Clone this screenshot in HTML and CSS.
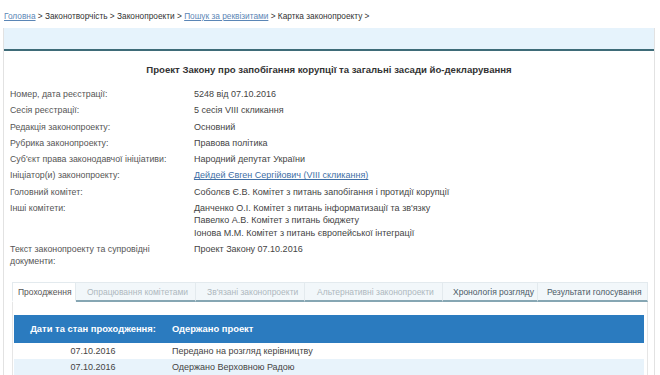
FILE: index.html
```html
<!DOCTYPE html>
<html lang="uk">
<head>
<meta charset="utf-8">
<title>Картка законопроекту</title>
<link rel="stylesheet" href="styles.css">
</head>
<body>
<div class="crumbs"><a href="#">Головна</a> &gt; Законотворчість &gt; Законопроекти &gt; <a href="#">Пошук за реквізитами</a> &gt; Картка законопроекту &gt;</div>
<div class="card">
  <div class="band"></div>
  <div class="content">
    <h1 class="title">Проект Закону про запобігання корупції та загальні засади йо-декларування</h1>
    <div class="info">
      <div class="lbl">Номер, дата реєстрації:</div><div class="val">5248 від 07.10.2016</div>
      <div class="lbl">Сесія реєстрації:</div><div class="val">5 сесія VIII скликання</div>
      <div class="lbl">Редакція законопроекту:</div><div class="val">Основний</div>
      <div class="lbl">Рубрика законопроекту:</div><div class="val">Правова політика</div>
      <div class="lbl">Суб'єкт права законодавчої ініціативи:</div><div class="val">Народний депутат України</div>
      <div class="lbl">Ініціатор(и) законопроекту:</div><div class="val"><a href="#">Дейдей Євген Сергійович (VIII скликання)</a></div>
      <div class="lbl">Головний комітет:</div><div class="val">Соболєв Є.В. Комітет з питань запобігання і протидії корупції</div>
      <div class="lbl">Інші комітети:</div><div class="val">Данченко О.І. Комітет з питань інформатизації та зв'язку<br>Павелко А.В. Комітет з питань бюджету<br>Іонова М.М. Комітет з питань європейської інтеграції</div>
      <div class="lbl">Текст законопроекту та супровідні<br>документи:</div><div class="val">Проект Закону 07.10.2016</div>
    </div>
    <div class="tabs">
      <div class="tab active">Проходження</div>
      <div class="tab off">Опрацювання комітетами</div>
      <div class="tab off">Зв'язані законопроекти</div>
      <div class="tab off">Альтернативні законопроекти</div>
      <div class="tab on">Хронологія розгляду</div>
      <div class="tab on">Результати голосування</div>
    </div>
    <div class="panel">
      <div class="thead">
        <div class="c1">Дати та стан проходження:</div>
        <div class="c2">Одержано проект</div>
      </div>
      <div class="trow">
        <div class="c1">07.10.2016</div>
        <div class="c2">Передано на розгляд керівництву</div>
      </div>
      <div class="trow alt">
        <div class="c1">07.10.2016</div>
        <div class="c2">Одержано Верховною Радою</div>
      </div>
    </div>
  </div>
</div>
</body>
</html>
```
FILE: styles.css
```css
html, body {
  margin: 0;
  padding: 0;
  background: #fff;
  font-family: "Liberation Sans", Arial, sans-serif;
  font-size: 9px;
  color: #444;
  overflow: hidden;
}
a { color: #3f6fa6; text-decoration: underline; }
.crumbs {
  margin: 9px 0 0 4px;
  line-height: 14px;
  height: 14px;
  font-size: 8.3px;
  color: #333;
  white-space: nowrap;
}
.crumbs a { color: #5b86b6; }
.card {
  margin: 5px 5px 0 3px;
  border-left: 1px solid #e2e2e2;
  border-right: 1px solid #e2e2e2;
}
.band {
  height: 21px;
  background: #e6f3fc;
  border-bottom: 2px solid #3e6b78;
}
.content { padding: 12px 6px 0 6px; }
.title {
  margin: 0;
  font-size: 9.6px;
  line-height: 14px;
  font-weight: bold;
  text-align: center;
  color: #333;
}
.info {
  margin-top: 9px;
  display: grid;
  grid-template-columns: 184px 1fr;
}
.lbl, .val {
  padding: 2px 0;
  line-height: 12.3px;
}
.lbl { color: #555; font-size: 8.8px; }
.val { color: #444; }
.tabs {
  margin: 12px 0 0 2px;
  display: flex;
  height: 20px;
  font-size: 8.5px;
}
.tab {
  box-sizing: border-box;
  flex: none;
  height: 20px;
  line-height: 18px;
  padding: 0 0 0 10px;
  background: #f2f7fa;
  border-top: 1px solid #e3eaee;
  border-right: 1px solid #e3eaee;
  border-bottom: 2px solid #86a6b3;
  white-space: nowrap;
  overflow: hidden;
}
.tab.active {
  background: #fff;
  border-left: 1px solid #e3eaee;
  border-bottom: 2px solid transparent;
  color: #555;
  width: 64px;
  padding-left: 5px;
}
.tab.off { color: #aeb8be; }
.tab.on { color: #4a5a66; }
.tab:nth-child(2) { width: 120px; padding-left: 11px; }
.tab:nth-child(3) { width: 109px; padding-left: 11px; }
.tab:nth-child(4) { width: 138px; padding-left: 12px; }
.tab:nth-child(5) { width: 95px; padding-left: 10px; }
.tab:nth-child(6) { width: 110px; padding-left: 9px; }
.panel {
  margin: 0 0 0 2px;
  border-left: 1px solid #e6e6e6;
  border-right: 1px solid #e6e6e6;
  padding: 13px 3px 0 1px;
}
.thead {
  display: flex;
  height: 28px;
  align-items: center;
  background: #2b7bbf;
  color: #fff;
  font-weight: bold;
  font-size: 9.4px;
}
.c1 { width: 158px; text-align: center; flex: none; }
.c2 { flex: 1; }
.trow {
  display: flex;
  height: 16px;
  align-items: center;
  color: #444;
}
.trow.alt { background: #e8f3fb; }
```
